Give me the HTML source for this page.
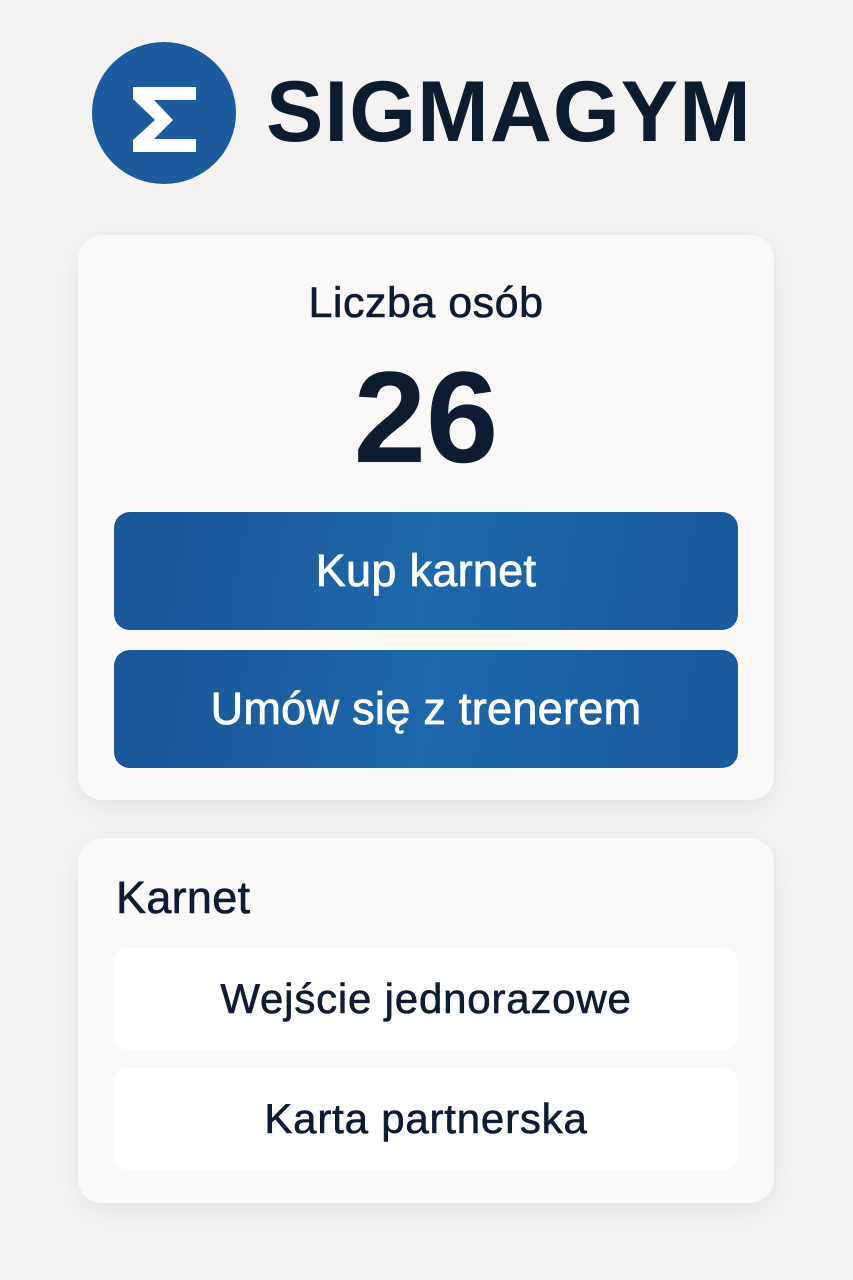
<!DOCTYPE html>
<html><head><meta charset="utf-8"><style>
body{margin:0;width:853px;height:1280px;background:#f4f3f2;font-family:"Liberation Sans",sans-serif;color:#0f1b30;position:relative;overflow:hidden}
.circle{position:absolute;left:92px;top:42px;width:144px;height:142px;border-radius:50%;background:#1c5c9e}
.logo{position:absolute;left:266px;top:62px;font-size:86px;font-weight:bold;letter-spacing:1px;color:#0d1b2e;line-height:100px}
.card{position:absolute;left:78px;width:696px;background:#faf9f8;border-radius:24px;box-shadow:0 8px 30px rgba(0,0,0,0.07)}
.btn{position:absolute;left:36px;width:624px;height:118px;border-radius:16px;background:linear-gradient(100deg,#1a5596,#1d67ab 50%,#1a5a9e);color:#fff;font-size:45px;letter-spacing:0.3px;-webkit-text-stroke:0.8px #fff;text-align:center;line-height:118px}
.item{position:absolute;left:36px;width:624px;height:102px;border-radius:14px;background:#fff;font-size:42px;letter-spacing:0.8px;-webkit-text-stroke:0.6px #0f1b30;text-align:center;line-height:102px}
</style></head><body>
<div class="circle"><svg width="144" height="142" viewBox="0 0 144 142"><path d="M41 45 H104 V58 H62 L81 78 L62 97 H104 V110 H41 V98 L63 78 L41 57 Z" fill="#fff"/></svg></div>
<div class="logo">SIGMAGYM</div>
<div class="card" style="top:235px;height:565px">
<div style="position:absolute;top:44px;width:100%;text-align:center;font-size:43px;letter-spacing:0.5px;-webkit-text-stroke:0.6px #0f1b30">Liczba osób</div>
<div style="position:absolute;top:112px;width:100%;text-align:center;font-size:130px;font-weight:bold;line-height:140px">26</div>
<div class="btn" style="top:277px">Kup karnet</div>
<div class="btn" style="top:415px">Umów się z trenerem</div>
</div>
<div class="card" style="top:838px;height:365px">
<div style="position:absolute;left:38px;top:34px;font-size:45px;letter-spacing:0.3px;-webkit-text-stroke:0.6px #0f1b30">Karnet</div>
<div class="item" style="top:110px">Wejście jednorazowe</div>
<div class="item" style="top:230px">Karta partnerska</div>
</div>
</body></html>
